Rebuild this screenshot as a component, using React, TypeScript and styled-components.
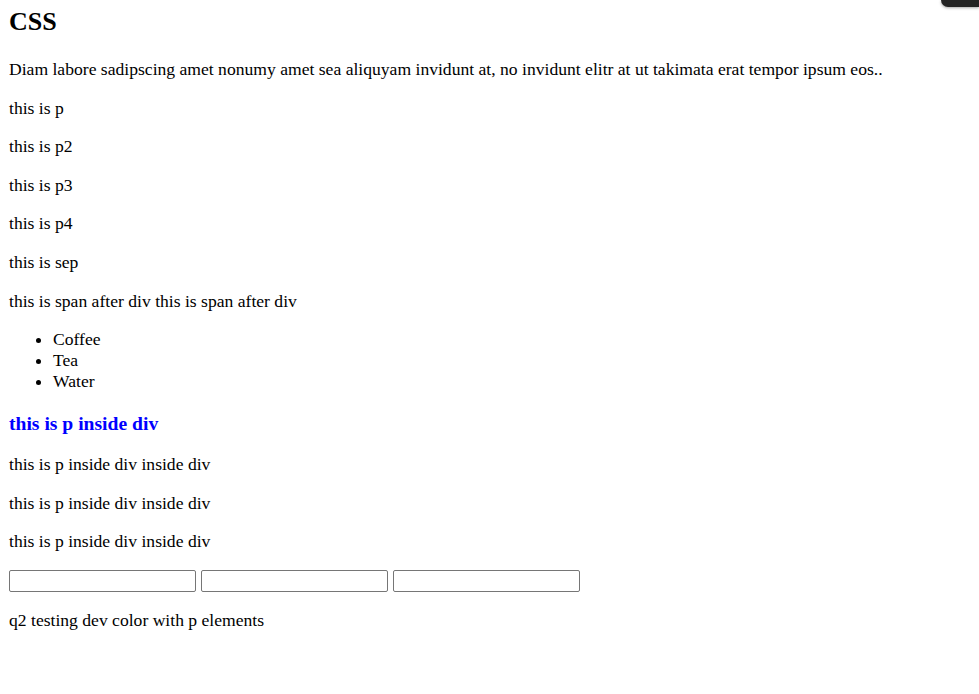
import React from "react";
import styled, { createGlobalStyle } from "styled-components";

const GlobalStyle = createGlobalStyle`
  html, body {
    margin: 0;
    padding: 0;
    background: #ffffff;
  }
  body {
    font-family: "Liberation Serif", "Times New Roman", serif;
    font-size: 17.6px;
    color: #000000;
  }
`;

const Page = styled.div`
  padding: 7px 9px 40px;
`;

const Title = styled.h1`
  font-size: 26px;
  line-height: 30px;
  font-weight: bold;
  margin: 0 0 22px;
`;

const Text = styled.p`
  margin: 18px 0;
  font-size: 17.6px;
  line-height: 20.6px;
`;

const List = styled.ul`
  margin: 18px 0;
  padding-left: 44px;

  li {
    line-height: 21px;
  }
`;

const Highlight = styled.p`
  margin: 19.5px 0;
  font-size: 19.6px;
  line-height: 23px;
  font-weight: bold;
  color: #0000ff;
`;

const FieldRow = styled.div`
  display: flex;
  gap: 5px;
`;

const Field = styled.input`
  box-sizing: border-box;
  width: 187px;
  height: 22px;
  margin: 0;
  padding: 1px 2px;
  border: 1px solid #767676;
  border-radius: 2px;
  background: #ffffff;
  font-family: "Liberation Sans", Arial, sans-serif;
  font-size: 15px;
`;

const CornerTab = styled.div`
  position: fixed;
  top: 0;
  right: 0;
  width: 38px;
  height: 7px;
  background: #232323;
  border-bottom-left-radius: 8px;
  box-shadow: 0 1px 3px rgba(0, 0, 0, 0.35);
`;

const paragraphs = ["this is p", "this is p2", "this is p3", "this is p4", "this is sep"];
const drinks = ["Coffee", "Tea", "Water"];

export default function App() {
  return (
    <>
      <GlobalStyle />
      <CornerTab />
      <Page>
        <Title>CSS</Title>
        <Text>
          Diam labore sadipscing amet nonumy amet sea aliquyam invidunt at, no invidunt elitr at ut
          takimata erat tempor ipsum eos..
        </Text>
        {paragraphs.map((p) => (
          <Text key={p}>{p}</Text>
        ))}
        <Text>
          <span>this is span after div</span> <span>this is span after div</span>
        </Text>
        <List>
          {drinks.map((d) => (
            <li key={d}>{d}</li>
          ))}
        </List>
        <Highlight>this is p inside div</Highlight>
        <Text>this is p inside div inside div</Text>
        <Text>this is p inside div inside div</Text>
        <Text>this is p inside div inside div</Text>
        <FieldRow>
          <Field type="text" />
          <Field type="text" />
          <Field type="text" />
        </FieldRow>
        <Text>q2 testing dev color with p elements</Text>
      </Page>
    </>
  );
}
